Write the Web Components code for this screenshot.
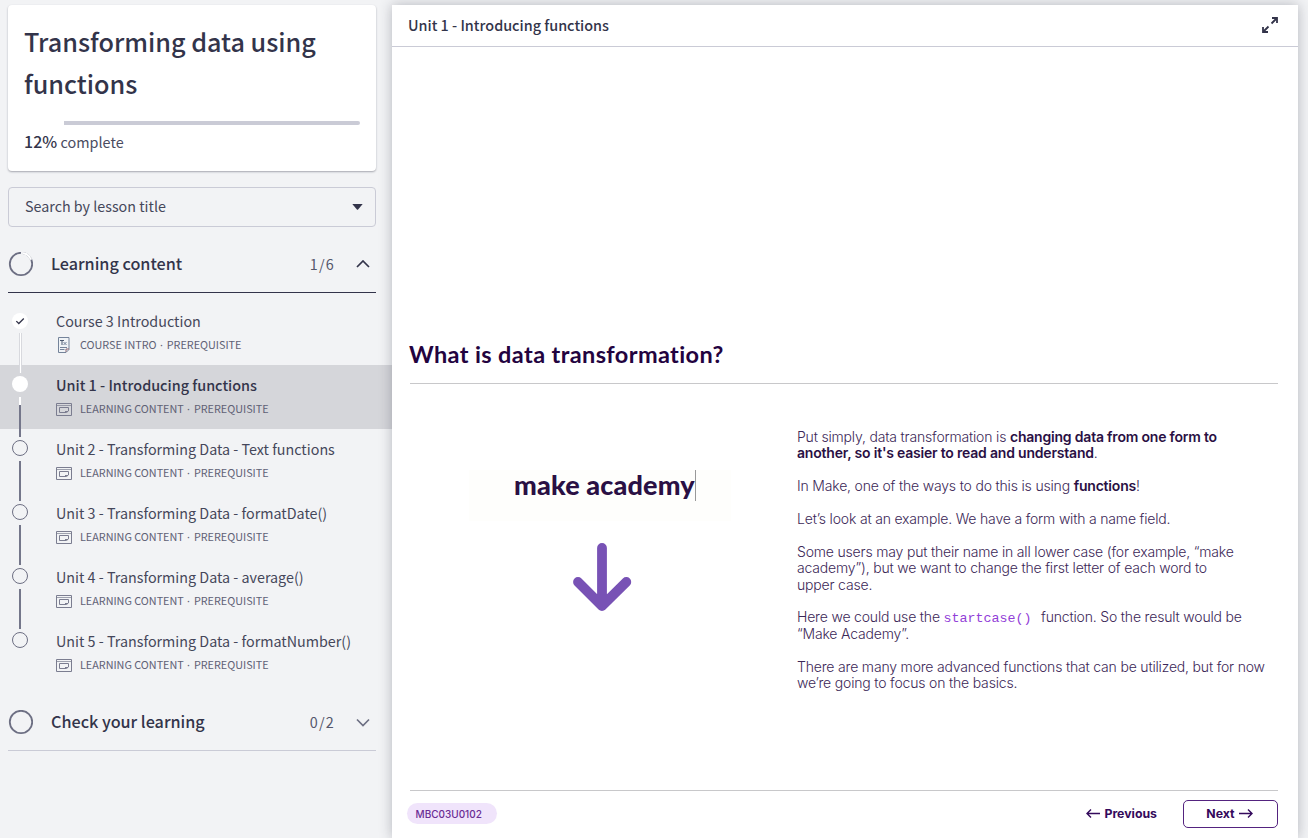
<!DOCTYPE html>
<html lang="en">
<head>
<meta charset="utf-8">
<title>Transforming data using functions</title>
<style>
html,body{margin:0;height:100%}
body{background:#f2f3f5;overflow:hidden;font-family:"Noto Sans CJK SC","Noto Sans",sans-serif;color:#33344a}
</style>
</head>
<body>
<course-app></course-app>
<script>
const define=(name,html)=>customElements.define(name,class extends HTMLElement{
  constructor(){super();this.attachShadow({mode:'open'});}
  connectedCallback(){
    const t=document.createElement('template');
    t.innerHTML=typeof html==='function'?html(this):html;
    this.shadowRoot.replaceChildren(t.content.cloneNode(true));
  }
});

define('course-card',`<style>
:host{display:block;box-sizing:border-box;height:166px;background:#fff;border-radius:4px;padding:15px 16px 0;box-shadow:0 1px 2px rgba(40,42,60,.38)}
h1{margin:0;font-size:25.2px;line-height:42px;font-weight:500;color:#33344a}
.bar{height:4px;margin-top:17px;border-radius:2px;background:linear-gradient(90deg,#fff 40px,#cacbd6 40px)}
p{margin:2px 0 0;font-size:14.4px;line-height:30px;color:#4a4c5f}
b{font-weight:500;font-size:15.9px;letter-spacing:.1px;color:#33344a}
</style><h1><slot></slot></h1><div class="bar"></div><p><b>12%</b> complete</p>`);

define('lesson-search',`<style>
:host{display:flex;box-sizing:border-box;height:40px;margin-top:16px;border:1px solid #cacbd6;border-radius:4px;align-items:center;justify-content:space-between;padding:0 12px 0 16px;font-size:14.3px;color:#45475a}
span{padding-bottom:3px}
svg{display:block}
</style><span><slot></slot></span><svg width="11" height="6"><path d="M.3 0h10.4L6.1 5.4q-.6.6-1.2 0z" fill="#33344a"/></svg>`);

define('section-head',e=>`<style>
:host{display:flex;box-sizing:border-box;height:57px;border-bottom:1px solid ${e.hasAttribute('open')?'#33344a':'#cacbd6'};align-items:center;padding-right:6px}
svg{display:block;flex:none}
.t{flex:1;margin-left:18px;padding-bottom:2px;font-size:16.18px;font-weight:500}
.n{font-size:14.4px;letter-spacing:1.2px;color:#55576b;margin-right:21px;padding-bottom:1px}
</style><svg width="25" height="25" fill="none"><circle cx="13" cy="12" r="11.2" stroke="#6d6f83" stroke-width="1.8"/>${e.hasAttribute('open')?'<path d="M13 .8A11.2 11.2 0 0 1 23.3 7.500" stroke="#f2f3f5" stroke-width="2.400"/><path d="M15 1.100A11.200 11.200 0 0 1 23 7.500" stroke="#c9cad2" stroke-width="2.200" stroke-dasharray="3 .8"/><path d="M15 1.100A11.200 11.200 0 0 1 23 7.500" stroke="#fff" stroke-width="1.700"/>':''}</svg>
<span class="t"><slot></slot></span><span class="n">${e.getAttribute('count')}</span>
<svg width="14" height="9" fill="none" stroke="${e.hasAttribute('open')?'#33344a':'#6d6f83'}" stroke-width="1.7"><path d="${e.hasAttribute('open')?'M1 7 7 1l6 6':'M1 1.5l6 6 6-6'}"/></svg>`);

const windowIcon='<svg width="16" height="13" fill="none" stroke="#7b7d90"><path d="M.5.5h15v12H.5z"/><path d="M.5 2.500h15" stroke-opacity=".7"/><path d="M3.500 4.500h9v3.500l-2 1.500h-7zM9 8.500h3"/></svg>';
const pageIcon='<svg width="16" height="16" fill="none"><path d="M2.500.5h10.500v12l-3 3H2.500z" fill="#f0f3f6" stroke="#74839a"/><path d="M4 3.500h4M6 3.500v4.500" stroke="#4d5a70"/><path d="m7.500 5 3 3M10.500 5l-3 3M4 10.500h7M4 12.500h4.500" stroke="#74839a"/><path d="M10 15v-3h3" stroke="#8d6470"/></svg>';
define('lesson-item',e=>{
  const s=e.getAttribute('state');
  return `<style>
:host{display:flex;box-sizing:border-box;height:64px;padding-left:12px;background:${s==='current'?'#d5d6da':'transparent'};color:#45475a}
.rail{position:relative;width:16px;margin-right:28px;padding-top:11px}
.rail>svg{display:block}
.line{position:absolute;left:7px;top:32px;width:2px;height:40px;z-index:1;background:#74768a}
.done .line{width:1px;background:#fff;border:solid #d8d9de;border-width:0 1px}
.current .line{background:linear-gradient(#fff 8px,#74768a 8px)}
.last .line{display:none}
.t{margin-top:8px;font-size:14.32px;line-height:24px;${s==='current'?'font-weight:500;font-size:14.4px;color:#33344a':''}}
.m{display:flex;align-items:center;height:16px;margin-top:4px;font-size:10.8px;line-height:16px;color:#5f6175}
.m span{margin-top:-2px}
.m i{font:normal 10.8px/16px "Noto Sans",sans-serif;letter-spacing:.55px}
.m svg{width:16px;margin-right:8px}
</style><div class="rail ${s}"><svg width="16" height="16" fill="none" overflow="visible">${s==='done'?'<circle cx="8" cy="9" r="8" fill="#fff"/><path d="m4.300 9.100 2.500 2.400 5-5" stroke="#33344a" stroke-width="1.300"/>':s==='current'?'<circle cx="8" cy="8" r="8" fill="#fff"/>':'<circle cx="8" cy="8" r="7.500" stroke="#6d6f83"/>'}</svg><i class="line"></i></div>
<div><div class="t"><slot></slot></div><div class="m">${s==='done'?pageIcon:windowIcon}<span>${e.getAttribute('kind')||'LEARNING CONTENT'}<i> · </i>PREREQUISITE</span></div></div>`});

define('course-sidebar',`<style>
:host{display:block;width:392px;flex:none;box-sizing:border-box;padding-top:5px}
.p{padding:0 16px 0 8px}
.g{margin-top:9px}
.l{padding-top:8px}
</style><div class="p"><course-card>Transforming data using functions</course-card><lesson-search>Search by lesson title</lesson-search>
<section-head class="g" open count="1/6">Learning content</section-head></div>
<div class="l"><lesson-item state="done" kind="COURSE INTRO">Course 3 Introduction</lesson-item>
<lesson-item state="current">Unit 1 - Introducing functions</lesson-item>
<lesson-item>Unit 2 - Transforming Data - Text functions</lesson-item>
<lesson-item>Unit 3 - Transforming Data - formatDate()</lesson-item>
<lesson-item>Unit 4 - Transforming Data - average()</lesson-item>
<lesson-item state="last">Unit 5 - Transforming Data - formatNumber()</lesson-item></div>
<div class="p"><section-head class="g" count="0/2">Check your learning</section-head></div>`);

define('case-demo',`<style>
:host{display:block;width:387px}
.w{box-sizing:border-box;width:262px;height:51px;margin:41px 0 0 59px;background:#fefefc;padding:0 0 0 45px;display:flex;align-items:flex-start;font:900 27px/29px Lato,sans-serif;letter-spacing:.16px;color:#2a1044}
i{width:1px;height:31px;background:#999}
svg{display:block;margin:21px 0 0 163px}
</style><div class="w"><span>make academy</span><i></i></div>
<svg width="60" height="72" fill="none" stroke="#7852b5" stroke-width="9.800" stroke-linecap="round" stroke-linejoin="round"><path d="M29 6v58M5 40l24 24 24.300-24"/></svg>`);

define('lesson-copy',`<style>
:host{display:block;width:480px;font:300 14px/16.300px Inter,sans-serif;letter-spacing:-.18px;color:#3c2857}
p{margin:0 0 16.600px;white-space:nowrap}
b{font-weight:600;letter-spacing:-.2px;color:#2a1044}
code{font:13.330px/0 "Liberation Mono",monospace;letter-spacing:0;margin-right:2px;color:#9240d8}
</style>
<p>Put simply, data transformation is <b>changing data from one form to<br>another, so it's easier to read and understand</b>.</p>
<p>In Make, one of the ways to do this is using <b>functions</b>!</p>
<p>Let’s look at an example. We have a form with a name field.</p>
<p>Some users may put their name in all lower case (for example, “make<br>academy”), but we want to change the first letter of each word to<br>upper case.</p>
<p>Here we could use the <code>startcase()</code>&nbsp; function. So the result would be<br>“Make Academy”.</p>
<p>There are many more advanced functions that can be utilized, but for now<br>we’re going to focus on the basics.</p>`);

define('lesson-footer',`<style>
:host{display:flex;box-sizing:border-box;height:48px;margin:0 20px 0 18px;border-top:1px solid #c8c8ca;align-items:center;font-family:Inter,sans-serif;padding-bottom:2px}
.tag{box-sizing:border-box;width:90px;height:21px;line-height:22px;margin-left:-3px;padding-left:8.500px;border-radius:11px;background:#f0e4fb;color:#6a2c94;font-size:10px;font-weight:500}
.sp{flex:1}
button{all:unset;box-sizing:border-box;display:flex;align-items:center;gap:4px;font-size:12.300px;font-weight:700;color:#340a5c}
.next{width:95px;height:28px;border:1px solid #54237f;border-radius:5px;justify-content:center;margin-left:26px;padding-right:2px}
</style><span class="tag">MBC03U0102</span><span class="sp"></span>
<button><svg width="14" height="9" fill="none" stroke="#340a5c" stroke-width="1.400"><path d="M14 4.500H1M5 .5l-4 4 4 4"/></svg>Previous</button>
<button class="next">Next<svg width="14" height="9" fill="none" stroke="#340a5c" stroke-width="1.400"><path d="M0 4.500h13M9 .5l4 4-4 4"/></svg></button>`);

define('lesson-panel',`<style>
:host{display:flex;flex-direction:column;box-sizing:border-box;width:906px;height:833px;margin-top:5px;background:#fff;box-shadow:0 0 12px rgba(40,42,60,.3)}
header{display:flex;box-sizing:border-box;height:42px;border-bottom:1px solid #cacbd6;align-items:center;justify-content:space-between;padding:0 19px 0 16px;font-size:14.400px;font-weight:500}
header span{padding-bottom:2px}
header svg{margin-top:-1px}
h2{margin:291px 0 0 17px;font:700 23.500px/32px Lato,sans-serif;letter-spacing:.39px;color:#23033f}
hr{margin:13px 20px 0 18px;border:0;border-top:1px solid #c8c8ca}
.c{display:flex;flex:1;padding:45px 0 0 18px}
</style><header><span>Unit 1 - Introducing functions</span><svg width="18" height="18" fill="none" stroke="#33344a" stroke-width="1.800"><path d="M10.500 7.500 15.500 2.500M7.500 10.500l-5 5"/><path d="M11 2h5v5M7 16H2v-5"/></svg></header>
<h2>What is data transformation?</h2><hr>
<div class="c"><case-demo></case-demo><lesson-copy></lesson-copy></div><lesson-footer></lesson-footer>`);

define('course-app',`<style>:host{display:flex;height:838px;width:1308px;overflow:hidden}</style><course-sidebar></course-sidebar><lesson-panel></lesson-panel>`);
</script>
</body>
</html>
